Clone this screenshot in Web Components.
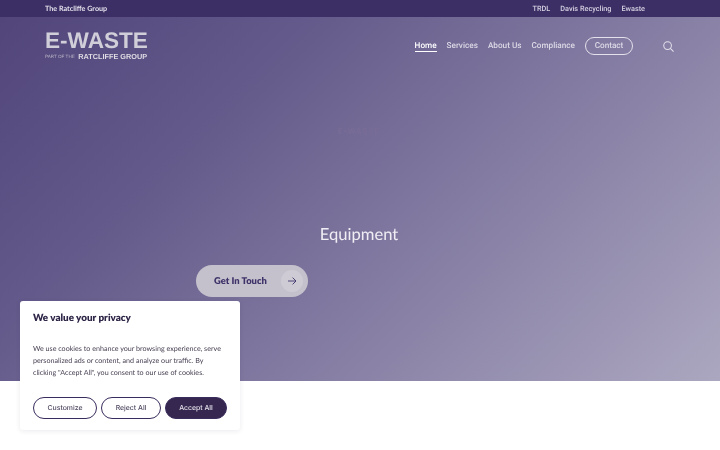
<!DOCTYPE html>
<html>
<head>
<meta charset="utf-8">
<title>E-Waste</title>
<style>
    html, body { margin: 0; height: 100%; background: #fff; overflow: hidden; }
    body { font-family: 'Lato', sans-serif; text-rendering: geometricPrecision; }
</style>
</head>
<body>
<ew-page>
    <ew-topbar slot="top"></ew-topbar>
    <ew-hero slot="hero"></ew-hero>
    <ew-cookie slot="overlay"></ew-cookie>
</ew-page>
<script>
class EwPage extends HTMLElement {
    constructor() {
        super();
        this.attachShadow({ mode: 'open' }).innerHTML = `
            <style>
                /* own layer: text gets greyscale antialiasing like the reference */
                :host { display: block; position: relative; width: 720px; height: 450px; overflow: hidden; will-change: transform; }
            </style>
            <slot name="top"></slot>
            <slot name="hero"></slot>
            <slot name="overlay"></slot>`;
    }
}

class EwTopbar extends HTMLElement {
    constructor() {
        super();
        this.attachShadow({ mode: 'open' }).innerHTML = `
            <style>
                :host {
                    display: flex; justify-content: space-between; align-items: center;
                    height: 17px; padding: 0 75px 0 45px;
                    background: #3c2f66; color: #d6d2e2;
                    font: 500 7.3px/17px Roboto, sans-serif;
                }
                .group { font: 700 7.2px/17px Lato, sans-serif; color: #e2dfea; }
                nav { display: flex; gap: 10px; }
            </style>
            <span class="group">The Ratcliffe Group</span>
            <nav><span>TRDL</span><span>Davis Recycling</span><span>Ewaste</span></nav>`;
    }
}

class EwHero extends HTMLElement {
    constructor() {
        super();
        this.attachShadow({ mode: 'open' }).innerHTML = `
            <style>
                :host {
                    display: block; position: relative; height: 364px;
                    background: linear-gradient(135deg, #51457a 0%, #63598a 28%, #aca7c0 100%);
                    color: #eceaf2;
                }
                header { display: flex; align-items: center; height: 57px; padding: 0 46px 0 45px; }
                .logo { display: flex; flex-direction: column; gap: 4px; color: #d0ced8; width: 103px; margin-top: 1px; }
                .mark { font: 700 22.6px/17px 'Liberation Sans', sans-serif; white-space: nowrap; }
                .logo small { font: 400 4.6px/8px 'Liberation Sans', sans-serif; color: #b9b5c6; white-space: nowrap; display: flex; align-items: center; gap: 3.5px; }
                .logo small b { font: 700 7.3px/8px 'Liberation Sans', sans-serif; color: #dedce4; }
                nav { margin-left: auto; display: flex; align-items: center; gap: 10px; font: 500 8.2px/12px Roboto, sans-serif; color: #dcd9e6; padding-top: 1px; }
                .home { color: #fff; line-height: 10px; border-bottom: 1px solid #fff; }
                .contact { width: 48px; box-sizing: border-box; text-align: center; height: 18px; line-height: 16px; border: 1px solid #e4e1ec; border-radius: 9px; }
                svg.search { margin-left: 20px; display: block; }
                .faint { position: absolute; left: -2px; right: 0; top: 108px; text-align: center; font: 500 8px/12px Inter, sans-serif; letter-spacing: 0.8px; color: #7a6d96; }
                h1 { position: absolute; left: 0; right: 2px; top: 205px; margin: 0; text-align: center; font: 400 16.6px/24px Lato, sans-serif; color: #f0eef4; }
                .cta {
                    position: absolute; left: 196px; top: 248px; width: 112px; height: 32px;
                    box-sizing: border-box; padding: 0 5px 0 18px;
                    display: flex; align-items: center; justify-content: space-between;
                    border-radius: 16px; background: #c4c1cc; color: #40336a;
                    font: 800 9.4px/14px Lato, sans-serif;
                }
                .cta span { padding-top: 1px; }
                .cta i { width: 22px; height: 22px; border-radius: 50%; background: #cecbd5; display: flex; align-items: center; justify-content: center; }
            </style>
            <header>
                <div class="logo"><span class="mark">E-WASTE</span><small>PART OF THE <b>RATCLIFFE GROUP</b></small></div>
                <nav>
                    <span class="home">Home</span><span>Services</span><span>About Us</span><span>Compliance</span>
                    <span class="contact">Contact</span>
                    <svg class="search" width="11" height="11" viewBox="0 0 12 12" fill="none" stroke="#e4e1ec" stroke-width="1.1"><circle cx="5" cy="5" r="4.2"/><path d="M8 8l3.5 3.5"/></svg>
                </nav>
            </header>
            <div class="faint">E-WASTE</div>
            <h1>Equipment</h1>
            <div class="cta"><span>Get In Touch</span>
                <i><svg width="10" height="10" viewBox="0 0 10 10" fill="none" stroke="#40336a" stroke-width="0.9"><path d="M1 5h8M5.6 1.6L9 5 5.6 8.4"/></svg></i>
            </div>`;
    }
}

class EwButton extends HTMLElement {
    constructor() {
        super();
        this.attachShadow({ mode: 'open' }).innerHTML = `
            <style>
                :host {
                    display: flex; align-items: center; justify-content: center;
                    box-sizing: border-box; height: 22px; border-radius: 11px;
                    border: 1px solid #3a2c5c; color: #4f4760;
                    font: 500 6.9px/10px Inter, sans-serif;
                }
                :host([primary]) { background: #35274f; color: #e6e3ec; }
            </style>
            <slot></slot>`;
    }
}

class EwCookie extends HTMLElement {
    constructor() {
        super();
        this.attachShadow({ mode: 'open' }).innerHTML = `
            <style>
                :host {
                    position: absolute; left: 20px; top: 301px; width: 220px; height: 129px;
                    box-sizing: border-box; padding: 11px 13px 0 13px;
                    background: #fff; border-radius: 3px;
                    box-shadow: 0 1px 5px rgba(50, 40, 80, 0.1);
                    display: flex; flex-direction: column;
                }
                h2 { margin: 0; font: 800 9.9px/13px Lato, sans-serif; color: #2f2547; }
                p { margin: 18px 0 0; font: 400 7.15px/12px Lato, sans-serif; color: #4a4355; width: 190px; }
                .actions { display: grid; grid-template-columns: 64px 60px 62px; gap: 4px; margin-top: 18px; }
            </style>
            <h2>We value your privacy</h2>
            <p>We use cookies to enhance your browsing experience, serve personalized ads or content, and analyze our traffic. By clicking "Accept All", you consent to our use of cookies.</p>
            <div class="actions">
                <ew-button>Customize</ew-button>
                <ew-button>Reject All</ew-button>
                <ew-button primary>Accept All</ew-button>
            </div>`;
    }
}

customElements.define('ew-page', EwPage);
customElements.define('ew-topbar', EwTopbar);
customElements.define('ew-hero', EwHero);
customElements.define('ew-button', EwButton);
customElements.define('ew-cookie', EwCookie);
</script>
</body>
</html>
